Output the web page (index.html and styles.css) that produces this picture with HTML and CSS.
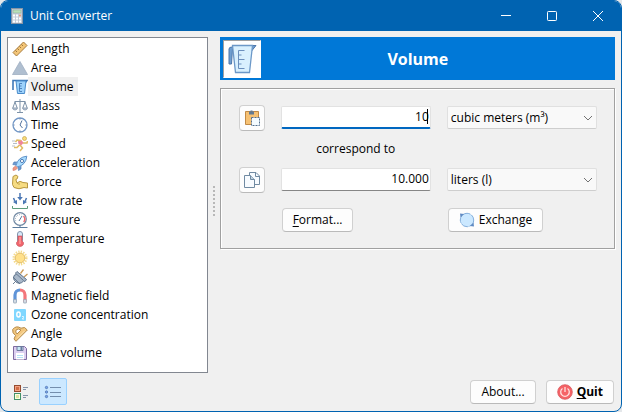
FILE: index.html
```html
<!DOCTYPE html>
<html lang="en">
<head>
<meta charset="utf-8">
<title>Unit Converter</title>
<link rel="stylesheet" href="styles.css">
</head>
<body>
<div class="window">
  <header class="titlebar">
    <svg class="app-icon" width="12" height="16" viewBox="0 0 12 16"><rect x=".5" y=".5" width="11" height="15" fill="#c3ccd8" stroke="#8795a6"/><rect x="2" y="2" width="8" height="3" fill="#b9e0b8" stroke="#8aa894" stroke-width=".5"/><path d="M2 7.500h8M2 10.500h8M2 13.500h8" stroke="#fff" stroke-width="2" stroke-dasharray="2 1"/><path d="M8 7.500h2" stroke="#e39a7d" stroke-width="2"/></svg>
    <h1 class="app-title">Unit Converter</h1>
    <button class="win-btn" aria-label="Minimize"><svg width="12" height="12" viewBox="0 0 12 12"><path d="M1 5.500h10" stroke="#fff"/></svg></button>
    <button class="win-btn" aria-label="Maximize"><svg width="12" height="12" viewBox="0 0 12 12"><rect x="1.500" y="1.500" width="9" height="9" rx=".8" fill="none" stroke="#fff"/></svg></button>
    <button class="win-btn" aria-label="Close"><svg width="12" height="12" viewBox="0 0 12 12"><path d="M1 1l10 10M11 1L1 11" stroke="#fff"/></svg></button>
  </header>
  <div class="content">
    <aside class="side">
      <ul class="list">
        <li><svg viewBox="0 0 16 16"><path d="M1 11.500L11.500 1l3.500 3.500L4.500 15z" fill="#f3c577" stroke="#a87d3e"/><path d="M3.500 9.500l1.500 1.500M5.500 7.500L7 9M7.500 5.500L9 7M9.500 3.500L11 5" stroke="#8a6530" stroke-width=".8"/></svg><button>Length</button></li>
        <li><svg viewBox="0 0 16 16"><path d="M8 1.500L15.500 14.500H.5z" fill="#b0bfd0" stroke="#9fafc2" stroke-width=".8"/></svg><button>Area</button></li>
        <li><svg viewBox="0 0 16 16"><path d="M1 11V1.500h14L13 4" fill="none" stroke="#3f78b8" stroke-width="1.600"/><path d="M4 2h10l-1.500 12.500h-7z" fill="#9dd2fb" stroke="#4a8ccb"/><path d="M7.500 4.500v8M7.500 4.500h2.500M7.500 7h2M7.500 9.500h2.500M7.500 12.500h2.500" stroke="#3a70ae" stroke-width=".8" fill="none"/></svg><button class="selected">Volume</button></li>
        <li><svg viewBox="0 0 16 16"><path d="M8 1v13M5 14.500h6M2.500 3.500h11M3 4L.8 10M3 4l2.200 6M13 4l-2.200 6M13 4l2.200 6" stroke="#7d92a8" fill="none"/><path d="M.5 10h5q-.5 2-2.500 2t-2.500-2zM10.500 10h5q-.5 2-2.500 2t-2.500-2z" fill="#c3cedb" stroke="#7d92a8" stroke-width=".8"/></svg><button>Mass</button></li>
        <li><svg viewBox="0 0 16 16"><circle cx="8" cy="8" r="7" fill="#fff" stroke="#7297c6" stroke-width="1.300"/><path d="M10 3.500L8 8l2.500 3M8 1.500v1M8 13.500v1M1.500 8h1M13.500 8h1" fill="none" stroke="#54749e"/></svg><button>Time</button></li>
        <li><svg viewBox="0 0 16 16"><circle cx="12.500" cy="2.500" r="2" fill="#f8dc79" stroke="#c7a450" stroke-width=".7"/><path d="M6 5l3.500-1L11.500 7 9 9.500 6.500 8z" fill="#ef849b"/><path d="M9 4.500L5 4 3.500 6M11 7h4l.5-2M8 9l2.500 3L8 15M7.500 9L5 11.500H2" fill="none" stroke="#dfba62" stroke-width="1.500"/><path d="M0 5h3M1 7.500h4M0 10h3" stroke="#a3adba" stroke-width=".8"/></svg><button>Speed</button></li>
        <li><svg viewBox="0 0 16 16"><path d="M5 7H2L.8 9.500 4 10M9 11v3l-2.500 1.500L6 12" fill="#6a9ad2" stroke="#527fb6" stroke-width=".7"/><path d="M4 10.500Q6 2 14.800 1.200 14 10 5.500 12z" fill="#a9dcff" stroke="#5d91c8"/><circle cx="10" cy="6" r="1.600" fill="#fff" stroke="#527fb6"/><path d="M3.500 11L1 13v2.500l2.500-.5 2-2z" fill="#ef9b84" stroke="#d9766a" stroke-width=".6"/></svg><button>Acceleration</button></li>
        <li><svg viewBox="0 0 16 16"><path d="M1 2.500l3-1.500 2 1.500L5 5 3.800 5.500 5 9q3-3 6-.5l4.500.5V14L12 13.500Q7 16 2 13.500L.5 10.500z" fill="#f6dc83" stroke="#b79742"/><path d="M5 9q1 1.500 3 1" fill="none" stroke="#b79742" stroke-width=".8"/></svg><button>Force</button></li>
        <li><svg viewBox="0 0 16 16"><path d="M8 0v5M1.500 5l1.500 3.500M14.500 5L13 8.500" stroke="#4b77b4" stroke-width="1.500"/><path d="M5.200 4h5.600L8 7.500zM1 9l4-2v4.500zM15 9l-4-2v4.500z" fill="#4b77b4"/><path d="M.5 13v2.500h15V13" fill="none" stroke="#5e9c7b"/></svg><button>Flow rate</button></li>
        <li><svg viewBox="0 0 16 16"><circle cx="8" cy="7" r="6.300" fill="#fff" stroke="#7189a3" stroke-width="1.200"/><path d="M3.800 9A4.600 4.600 0 0 1 9.500 2.800" fill="none" stroke="#91a5bb" stroke-dasharray="1 1"/><path d="M11.500 4a4.600 4.600 0 0 1 .2 6" fill="none" stroke="#ee6c70" stroke-width="1.500"/><path d="M7 9l3-5M8 13v2.500M.5 15.500h15" stroke="#5b7c9e"/></svg><button>Pressure</button></li>
        <li><svg viewBox="0 0 16 16"><rect x="5.500" y=".5" width="5" height="11" rx="2.500" fill="#d6e9f9" stroke="#8292aa"/><path d="M6 5h4v5q2 1 1.500 3.200Q10.500 15.500 8 15.500T4.500 13.200Q4 11 6 10z" fill="#f1666d" stroke="#cc5961" stroke-width=".7"/><path d="M8 6v7" stroke="#ffb5b3"/></svg><button>Temperature</button></li>
        <li><svg viewBox="0 0 16 16"><circle cx="8" cy="8" r="6.300" fill="none" stroke="#f4da8b" stroke-width="2.400" stroke-dasharray="1.300 1.170"/><circle cx="8" cy="8" r="4.800" fill="#ffe08a" stroke="#e3bf68"/></svg><button>Energy</button></li>
        <li><svg viewBox="0 0 16 16"><path d="M8.500 4.500l3-4M12 8l3.500-3" stroke="#c99a59" stroke-width="1.300"/><path d="M3.500 4L5 2.500l9.500 8L13 12.500l-1.500-.5q-3.500 4-7.500 1T2.500 6l2-.5z" fill="#a9b8c9" stroke="#5f738b"/><path d="M3.500 12.500L1 15M1 8l7 7M5 5.500l6.500 6" stroke="#5f738b" stroke-width=".9"/></svg><button>Power</button></li>
        <li><svg viewBox="0 0 16 16"><path d="M3 14V7a5 5 0 0 1 5-5" fill="none" stroke="#5f94d8" stroke-width="3.200"/><path d="M8 2a5 5 0 0 1 5 5v7" fill="none" stroke="#f3777c" stroke-width="3.200"/><path d="M1.700 11.500h2.600v3.500H1.700zM11.700 11.500h2.600v3.500h-2.600z" fill="#dde4ec" stroke="#96a4b4" stroke-width=".8"/></svg><button>Magnetic field</button></li>
        <li><svg viewBox="0 0 16 16"><rect x="2" y="2" width="12" height="12" rx="1" fill="#80d7ff"/><ellipse cx="6.500" cy="7.500" rx="1.700" ry="2.500" fill="none" stroke="#fff" stroke-width="1.400"/><path d="M10 9.500h1.500v1L10.300 12H12" fill="none" stroke="#fff" stroke-width=".8"/></svg><button>Ozone concentration</button></li>
        <li><svg viewBox="0 0 16 16"><path fill-rule="evenodd" d="M.7 3.500Q4-1 9 2.200L12.500 1.500 15.300 4 4 15.300 2 13l1.500-3.500Q0 7 .7 3.500zM4 4q-1 2 1 4l4-4Q6 2 4 4z" fill="#f3c77e" stroke="#b38a4b"/><path d="M5 12.500l7.500-7.500" stroke="#fbe3b3"/></svg><button>Angle</button></li>
        <li><svg viewBox="0 0 16 16"><path d="M1.500 1.500h11l2 2v11h-13z" fill="#dccff0" stroke="#7e6aa1"/><path d="M5 1.500h6v4H5z" fill="#c6e7f4" stroke="#6d7a9e"/><path d="M8.500 2h1.500v3H8.500z" fill="#6d7a9e"/><path d="M4 8h8v6.500H4z" fill="#fff"/><path d="M5 10.500h6M5 12.500h6" stroke="#b8e1f5"/></svg><button>Data volume</button></li>
      </ul>
      <div class="view-switch">
        <button class="view" aria-label="Large icons"><svg width="16" height="16" viewBox="0 0 16 16"><rect x="1.500" y="1.500" width="6" height="6" fill="#f2a183" stroke="#954b2e"/><rect x="3" y="3" width="3" height="3" fill="#d16d46"/><rect x="1.500" y="9.500" width="6" height="6" fill="#fffde1" stroke="#439268"/><rect x="3" y="11" width="3" height="3" fill="#dce9a2"/><path d="M10 3.500h5M10 5.500h3M10 11.500h5M10 13.500h3" stroke="#8493a8"/></svg></button>
        <button class="view active" aria-label="Small icons" aria-pressed="true"><svg width="18" height="16" viewBox="0 0 18 16"><path d="M6 3.500h11M6 8.500h11M6 12.500h11" stroke="#748ead"/><circle cx="2.500" cy="3.500" r="1.200" fill="#79a5ed" stroke="#4a6fa8" stroke-width=".7"/><circle cx="2.500" cy="8" r="1.200" fill="#79a5ed" stroke="#4a6fa8" stroke-width=".7"/><circle cx="2.500" cy="12.500" r="1.200" fill="#79a5ed" stroke="#4a6fa8" stroke-width=".7"/></svg></button>
      </div>
    </aside>
    <div class="splitter"><span class="grip"></span></div>
    <main class="main">
      <div class="banner">
        <span class="banner-icon"><svg width="30" height="30" viewBox="0 0 30 30"><path d="M2 20V5q0-2 3-2h2V5H5.500L4.500 20z" fill="#6f9ed0" stroke="#4d77ab"/><path d="M24 1.500h5l-4 5z" fill="#6f9ed0" stroke="#4d77ab"/><path d="M5.500 1.500h20L22.500 28.500h-14z" fill="#d9f0fe" stroke="#6c98c8" stroke-width="1.300"/><path d="M11.500 6.500v18M11.500 6.500h6M11.500 11h3M11.500 15.500h6M11.500 20h3M11.500 24.500h6" stroke="#6b8fbd"/></svg></span>
        <h2 class="banner-title">Volume</h2>
      </div>
      <form class="panel">
        <button type="button" class="btn tool" aria-label="Paste"><svg width="16" height="16" viewBox="0 0 16 16"><path d="M1.500 1.500h13v13h-13z" fill="#f6c173" stroke="#c18a45"/><path d="M5 1.500h1.500V.5h2v1H10v3H5z" fill="#627991"/><rect x="7.500" y="7.500" width="8" height="8" fill="#f4fbff" stroke="#536f8d" stroke-dasharray="2 1"/></svg></button>
        <div class="field-wrap"><input class="field focused" type="text" value="10" aria-label="Input value"><span class="caret"></span></div>
        <div class="select-wrap"><select class="select" aria-label="Input unit"><option>cubic meters (m³)</option></select><svg class="chevron" width="10" height="6" viewBox="0 0 10 6"><path d="M1 1l4 4 4-4" fill="none" stroke="#737373"/></svg></div>
        <p class="caption">correspond to</p>
        <button type="button" class="btn tool" aria-label="Copy"><svg width="16" height="16" viewBox="0 0 16 16"><path d="M5.500 3V.500H12l3.500 3.500v8.500H11" fill="#f7fbff" stroke="#708aa2"/><path d="M11.500.500v4h4" fill="none" stroke="#708aa2"/><path d="M.500 3.500h6L10.500 7.500v8h-10z" fill="#f7fbff" stroke="#708aa2"/><path d="M6.500 3.500v4h4" fill="#bed1df" stroke="#708aa2"/></svg></button>
        <div class="field-wrap"><input class="field" type="text" value="10.000" aria-label="Result" readonly></div>
        <div class="select-wrap"><select class="select" aria-label="Result unit"><option>liters (l)</option></select><svg class="chevron" width="10" height="6" viewBox="0 0 10 6"><path d="M1 1l4 4 4-4" fill="none" stroke="#737373"/></svg></div>
        <button type="button" class="btn format"><span><u>F</u>ormat...</span></button>
        <button type="button" class="btn exchange"><svg width="16" height="16" viewBox="0 0 16 16"><circle cx="8" cy="8" r="6.700" fill="#cbe8ff" stroke="#83aedb" stroke-dasharray="8 1"/><path d="M1 1.500l4 .5L1.500 5.500zM15 14.500l-4-.5 3.500-3.500z" fill="#608bc3"/></svg>Exchange</button>
      </form>
      <footer class="actions">
        <button class="btn about">About...</button>
        <button class="btn quit"><svg width="16" height="16" viewBox="0 0 16 16"><circle cx="8" cy="8" r="7.300" fill="#f56367" stroke="#d9575c" stroke-width=".8"/><path d="M5.500 4.500a4.300 4.300 0 1 0 5 0M8 3v5" fill="none" stroke="#ffe1df" stroke-width="1.300"/></svg><span><u>Q</u>uit</span></button>
      </footer>
    </main>
  </div>
</div>
</body>
</html>
```
FILE: styles.css
```css
* { box-sizing: border-box; }
body {
  margin: 0;
  background: #e4e7ea;
  color: #000;
  font: 12px/16px "Open Sans", "Noto Sans", sans-serif;
}
button, input, select { font: inherit; color: inherit; }
svg { display: block; flex: none; }
h1, h2, p, ul { margin: 0; padding: 0; }

.window {
  display: flex;
  flex-direction: column;
  min-height: 100vh;
  overflow: hidden;
  background: #f0f0f0;
  border: 1px solid #0063b1;
  border-radius: 8px;
}
.titlebar {
  display: flex;
  align-items: center;
  height: 30px;
  padding-left: 10px;
  background: #0063b1;
  color: #fff;
}
.app-title {
  flex: 1;
  margin-left: 7px;
  font-size: 12px;
  font-weight: 400;
}
.win-btn {
  display: flex;
  align-items: center;
  justify-content: center;
  width: 46px;
  height: 30px;
  padding: 0;
  border: 0;
  background: none;
}

.content { display: flex; flex: 1; padding: 6px; }
.side { display: flex; flex-direction: column; width: 33%; }
.list {
  flex: 1;
  padding: 1px 4px;
  list-style: none;
  background: #fff;
  border: 1px solid #828790;
}
.list li { display: flex; align-items: center; height: 19px; }
.list svg { width: 16px; height: 16px; }
.list button {
  height: 19px;
  padding: 0 4px 0 3px;
  border: 0;
  background: none;
}
.list .selected { background: #f0f0f0; }
.view-switch { display: flex; gap: 4px; padding-top: 5px; }
.view {
  display: flex;
  align-items: center;
  justify-content: center;
  width: 28px;
  height: 27px;
  padding: 0;
  border: 1px solid transparent;
  border-radius: 2px;
  background: none;
}
.view.active { background: #cce8ff; border-color: #99d1ff; }

.splitter { display: flex; width: 12px; padding: 149px 0 0 5px; }
.grip {
  width: 2px;
  height: 30px;
  background: repeating-linear-gradient(#b8b8b8 0 2px, transparent 2px 4px);
}

.main { display: flex; flex: 1; flex-direction: column; min-width: 0; }
.banner {
  display: flex;
  align-items: center;
  height: 43px;
  padding-left: 3px;
  background: #0078d7;
  color: #fff;
}
.banner-icon {
  display: flex;
  align-items: center;
  justify-content: center;
  width: 38px;
  height: 38px;
  background: #fff;
  border: 1px solid;
  border-color: #a0a0a0 #fff #fff #a0a0a0;
}
.banner-title {
  flex: 1;
  padding-right: 40px;
  text-align: center;
  font-size: 16px;
  line-height: 22px;
}

.panel {
  display: grid;
  grid-template-columns: 26px 1fr 1fr;
  grid-template-rows: 27px 35px 27px 39px;
  column-gap: 16px;
  align-items: center;
  margin-top: 8px;
  padding: 15px 17px 16px 18px;
  border: 1px solid #a0a0a0;
  box-shadow: inset 1px 1px #fff, 1px 1px #fff;
}
.caption { grid-column: 2; text-align: center; }

.btn {
  display: flex;
  align-items: center;
  justify-content: center;
  height: 24px;
  padding: 0 10px;
  background: #fdfdfd;
  border: 1px solid #d0d0d0;
  border-bottom-color: #bababa;
  border-radius: 4px;
}
.btn u { text-underline-offset: 2px; }
.tool { grid-column: 1; height: 26px; padding: 0; }
.format, .exchange {
  align-self: end;
  justify-self: start;
  margin-left: 1px;
}
.format { grid-column: 2; }
.exchange { gap: 4px; }

.field-wrap, .select-wrap { position: relative; display: flex; }
.field {
  width: 100%;
  height: 23px;
  padding: 0 1px 2px;
  text-align: right;
  background: #fff;
  border: 1px solid #e2e2e2;
  border-bottom-color: #868686;
  border-radius: 2px;
  outline: 0;
}
.focused { padding-bottom: 1px; border-bottom: 2px solid #0067c0; }
.caret {
  position: absolute;
  top: 3px;
  right: 3px;
  width: 1px;
  height: 15px;
  background: #000;
}
.select {
  width: 100%;
  height: 23px;
  padding: 0 20px 0 3px;
  appearance: none;
  background: #f9f9f9;
  border: 1px solid #e0e0e0;
  border-bottom-color: #cecece;
  border-radius: 2px;
}
.chevron { position: absolute; top: 9px; right: 4px; pointer-events: none; }

.actions {
  display: flex;
  gap: 10px;
  justify-content: flex-end;
  margin-top: auto;
  padding: 0 1px 1px 0;
}
.quit { gap: 4px; font-weight: 700; }
```
